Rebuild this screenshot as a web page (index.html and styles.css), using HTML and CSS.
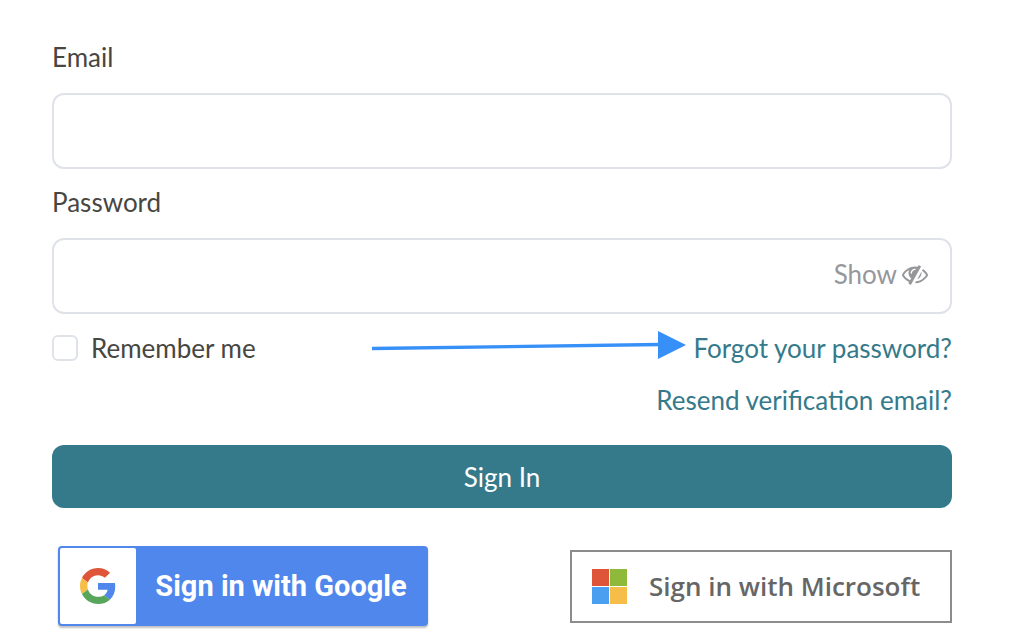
FILE: index.html
```html
<!DOCTYPE html>
<html lang="en">
<head>
    <meta charset="UTF-8">
    <meta name="viewport" content="width=device-width, initial-scale=1.0">
    <title>Sign In</title>
    <link rel="stylesheet" href="styles.css">
</head>
<body>

    <form id="signInForm" class="sign-in-form">
        <label class="field-label" for="email">Email</label>
        <input class="field-input" type="email" id="email" name="email">

        <label class="field-label" for="password">Password</label>
        <div class="password-field">
            <input class="field-input" type="password" id="password" name="password">
            <button type="button" id="showBtn" class="show-btn">
                Show
                <svg class="eye-icon" viewBox="0 0 1792 1792" aria-hidden="true">
                    <path fill="currentColor" d="M555 1335l78-141q-87-63-136-159t-49-203q0-121 61-225-229 117-381 353 167 258 427 375zm389-759q0-20-14-34t-34-14q-125 0-214.5 89.5t-89.5 214.5q0 20 14 34t34 14 34-14 14-34q0-86 61-147t147-61q20 0 34-14t14-34zm363-191q0 7-1 9-106 189-316 567t-315 566l-49 89q-10 16-28 16-12 0-134-70-16-10-16-28 0-12 44-87-143-65-263.5-173t-208.5-245q-20-31-20-69t20-69q153-235 380-371t496-136q89 0 180 17l54-97q10-16 28-16 5 0 18 6t31 15.5 33 18.5 31.5 18.5 19.5 11.5q16 10 16 27zm37 447q0 139-79 253.5t-209 164.5l280-502q8 45 8 84zm448 128q0 35-20 69-39 64-109 145-150 172-347.5 267t-419.5 95l74-132q212-18 392.5-137t301.5-307q-115-179-282-294l63-112q95 64 182.5 153t144.5 184q20 34 20 69z"/>
                </svg>
            </button>
        </div>

        <!-- Remember me and account links -->
        <div class="options">
            <div class="option-row">
                <label class="remember" for="remember">
                    <input type="checkbox" id="remember" name="remember">
                    Remember me
                </label>
                <svg class="arrow" viewBox="0 0 314 30" aria-hidden="true">
                    <path d="M0 18.5L288 14.5" stroke="#3790f7" stroke-width="3.4"/>
                    <path d="M286 1L314 15L286 29z" fill="#3790f7"/>
                </svg>
                <a href="#">Forgot your password?</a>
            </div>
            <div class="option-row">
                <a href="#">Resend verification email?</a>
            </div>
        </div>

        <button type="submit" class="submit-btn">Sign In</button>

        <!-- Other sign in providers -->
        <div class="providers">
            <button type="button" class="google-btn">
                <span class="google-logo">
                    <svg viewBox="0 0 48 48" aria-hidden="true">
                        <path fill="#df5539" d="M24 9.5c3.54 0 6.71 1.22 9.21 3.6l6.85-6.85C35.9 2.38 30.47 0 24 0 14.62 0 6.51 5.38 2.56 13.22l7.98 6.19C12.43 13.72 17.74 9.5 24 9.5z"/>
                        <path fill="#4f87ec" d="M46.98 24.55c0-1.57-.15-3.09-.38-4.55H24v9.02h12.94c-.58 2.96-2.26 5.48-4.78 7.18l7.73 6c4.51-4.18 7.09-10.36 7.09-17.65z"/>
                        <path fill="#f6be49" d="M10.53 28.59c-.48-1.45-.76-2.99-.76-4.59s.27-3.14.76-4.59l-7.98-6.19C.92 16.46 0 20.12 0 24c0 3.88.92 7.54 2.56 10.78l7.97-6.19z"/>
                        <path fill="#58a55c" d="M24 48c6.48 0 11.93-2.13 15.89-5.81l-7.73-6c-2.15 1.45-4.92 2.3-8.16 2.3-6.26 0-11.57-4.22-13.47-9.91l-7.98 6.19C6.51 42.62 14.62 48 24 48z"/>
                    </svg>
                </span>
                <span class="google-text">Sign in with Google</span>
            </button>
            <button type="button" class="microsoft-btn">
                <svg class="microsoft-logo" viewBox="0 0 35 35" aria-hidden="true">
                    <path fill="#df5539" d="M0 0h17v17H0z"/>
                    <path fill="#8fb93a" d="M18 0h17v17H18z"/>
                    <path fill="#4a9ff0" d="M0 18h17v17H0z"/>
                    <path fill="#f6be49" d="M18 18h17v17H18z"/>
                </svg>
                Sign in with Microsoft
            </button>
        </div>
    </form>

    <script>
        // Toggle the password between hidden and plain text
        document.getElementById('showBtn').addEventListener('click', function () {
            const password = document.getElementById('password');
            password.type = password.type === 'password' ? 'text' : 'password';
        });
    </script>

</body>
</html>
```
FILE: styles.css
```css
body {
    font-family: Lato, "Liberation Sans", sans-serif;
    font-size: 26px;
    margin: 0;
    background-color: #fff;
    color: #484642;
}
.sign-in-form {
    display: flex;
    flex-direction: column;
    padding: 39px 64px 15px 52px;
}
button {
    font-family: inherit;
    font-size: inherit;
    cursor: pointer;
}
a {
    color: #357a8a;
    text-decoration: none;
}
a:hover {
    text-decoration: underline;
}
.field-label {
    line-height: 36px;
    margin-bottom: 18px;
}
.field-input {
    width: 100%;
    height: 76px;
    box-sizing: border-box;
    padding: 0 24px;
    border: 2px solid #dfe2e8;
    border-radius: 12px;
    font: inherit;
    color: inherit;
    margin-bottom: 15px;
}
.password-field {
    position: relative;
}
.password-field .field-input {
    display: block;
    padding-right: 130px;
    margin-bottom: 8px;
}
.show-btn {
    position: absolute;
    top: 16px;
    right: 24px;
    display: flex;
    align-items: center;
    gap: 5px;
    padding: 0;
    border: none;
    background: none;
    color: #96979a;
    line-height: 40px;
}
.eye-icon {
    width: 26px;
    height: 26px;
}
.options {
    margin-bottom: 19px;
}
.option-row {
    display: flex;
    align-items: center;
    justify-content: flex-end;
    line-height: 52px;
}
.remember {
    display: flex;
    align-items: center;
    gap: 13px;
    margin-right: auto;
}
.remember input {
    appearance: none;
    width: 26px;
    height: 26px;
    margin: 0;
    border: 2px solid #dfe2e8;
    border-radius: 6px;
}
.remember input:checked {
    background-color: #357a8a;
}
.arrow {
    width: 314px;
    height: 30px;
    margin-right: 7px;
    margin-bottom: 6px;
}
.submit-btn {
    height: 63px;
    border: none;
    border-radius: 12px;
    background-color: #357a8a;
    color: #fff;
    margin-bottom: 38px;
}
.providers {
    display: flex;
    align-items: center;
    justify-content: space-between;
    padding-left: 6px;
}
.google-btn {
    display: flex;
    align-items: center;
    width: 370px;
    height: 80px;
    padding: 0;
    border: 2px solid #4f87ec;
    border-radius: 4px;
    background-color: #4f87ec;
    box-shadow: 0 2px 2px rgba(0, 0, 0, 0.25);
    color: #fff;
    font-family: Roboto, "Liberation Sans", sans-serif;
    font-size: 29px;
    font-weight: 700;
}
.google-logo {
    display: flex;
    align-items: center;
    justify-content: center;
    width: 76px;
    height: 76px;
    border-radius: 2px;
    background-color: #fff;
}
.google-logo svg {
    width: 36px;
    height: 36px;
}
.google-text {
    flex: 1;
    text-align: center;
}
.microsoft-btn {
    display: flex;
    align-items: center;
    gap: 22px;
    width: 382px;
    height: 73px;
    padding: 0 20px;
    border: 2px solid #8c8c8c;
    background-color: #fff;
    color: #666;
    font-family: "Open Sans", "Noto Sans", sans-serif;
    font-weight: 600;
    white-space: nowrap;
}
.microsoft-logo {
    width: 35px;
    height: 35px;
}
```
